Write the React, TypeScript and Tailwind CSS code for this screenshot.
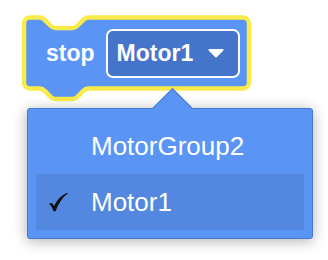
import React from "react";

const font = { fontFamily: '"Liberation Sans", Arial, Helvetica, sans-serif' };

function BlockShape() {
  const d =
    "M 24,23.5 A 6 6 0 0 1 30,17.5 H 40 " +
    "c 2.5,0 3.75,1.3 5,2.6 l 5,5.2 c 1.25,1.3 2.5,2.6 5,2.6 h 18 c 2.5,0 3.75,-1.3 5,-2.6 l 5,-5.2 c 1.25,-1.3 2.5,-2.6 5,-2.6 " +
    "H 243 A 6 6 0 0 1 249,23.5 V 82.5 A 6 6 0 0 1 243,88.5 H 88 " +
    "c -2.5,0 -3.75,1.3 -5,2.6 l -5,5.2 c -1.25,1.3 -2.5,2.6 -5,2.6 h -18 c -2.5,0 -3.75,-1.3 -5,-2.6 l -5,-5.2 c -1.25,-1.3 -2.5,-2.6 -5,-2.6 " +
    "H 30 A 6 6 0 0 1 24,82.5 Z";
  return (
    <svg
      className="absolute left-0 top-0"
      width="232"
      height="90"
      viewBox="21 15 232 90"
    >
      <path d={d} fill="#5A95F5" stroke="#FAEB4A" strokeWidth="4.5" strokeLinejoin="round" />
    </svg>
  );
}

function Check() {
  return (
    <svg width="20" height="20" viewBox="0 0 20 20">
      <path
        d="M1 11.6 C2.8 10.2 4.8 11 6.2 14 C9 7.8 13 3.4 19.6 0.8 L19.8 1.6 C15.2 5 10.6 10.8 7.8 19.2 L5.4 19.2 C4.4 16 2.8 13.4 1 11.6 Z"
        fill="#111"
      />
    </svg>
  );
}

export default function App() {
  return (
    <div className="relative w-[328px] h-[260px] bg-white overflow-hidden" style={font}>
      <div className="pt-[15px] pl-[21px]">
        <div className="relative w-[232px] h-[90px]">
          <BlockShape />
          <div className="relative flex items-center h-[76px] pl-[25px] gap-[11px]">
            <span className="text-white font-bold text-[23px]">stop</span>
            <div className="flex items-center w-[134px] h-[49px] rounded-[7px] border-2 border-white bg-[#4574CB] pl-[9px]">
              <span className="text-white font-bold text-[23px]">Motor1</span>
              <svg className="ml-[15px]" width="16" height="9" viewBox="0 0 16 9">
                <path d="M1.5 1 L14.5 1 L8 7.5 Z" fill="white" stroke="white" strokeWidth="2" strokeLinejoin="round" />
              </svg>
            </div>
          </div>
        </div>
      </div>

      <div className="absolute left-[27px] top-[108px] w-[286px] h-[131px] rounded-[3px] border border-[#4779D0] bg-[#5A95F5] shadow-[0_2px_14px_rgba(0,0,0,0.32)] pt-[9px] px-[8px]">
        <div className="flex items-center h-[56px] text-white text-[26px]">
          <span className="w-[55px]" />
          <span>MotorGroup2</span>
        </div>
        <div className="flex items-center h-[56px] bg-[#5387E0] text-white text-[26px]">
          <span className="w-[55px] pl-[12px] flex">
            <Check />
          </span>
          <span>Motor1</span>
        </div>
      </div>
      <div className="absolute left-[158px] top-[94px] w-[29px] h-[29px] rotate-45 bg-[#5A95F5] border-t border-l border-[#4779D0]" />
    </div>
  );
}
